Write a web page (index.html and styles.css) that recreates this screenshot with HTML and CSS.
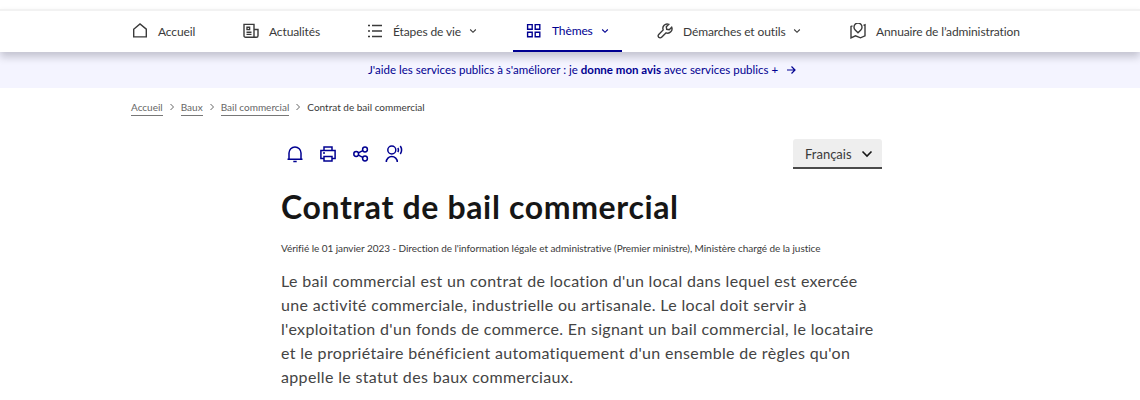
FILE: index.html
```html
<!DOCTYPE html>
<html lang="fr">
<head>
  <meta charset="UTF-8">
  <title>Contrat de bail commercial</title>
  <meta name="viewport" content="width=device-width, initial-scale=1.0">
  <link rel="stylesheet" href="styles.css">
</head>
<body>
  <header class="header">
    <nav class="nav">
      <a class="nav-item" href="#">
        <svg class="icon" viewBox="0 0 16 16"><path d="M1.700 6.200 8 1l6.300 5.200v7.700H1.700z"/></svg>
        <span class="nav-label">Accueil</span>
      </a>
      <a class="nav-item" href="#">
        <svg class="icon" viewBox="0 0 16 16"><path d="M11 14.300H2.600A1.600 1.600 0 0 1 1 12.700V1.400h10zM11 6.500h4v6.200a1.600 1.600 0 0 1-1.600 1.600H10.500M3.500 9.200h5M3.500 11.400h5M4 4.200h2.600v2.400H4z"/></svg>
        <span class="nav-label">Actualités</span>
      </a>
      <a class="nav-item" href="#">
        <svg class="icon" viewBox="0 0 16 16"><path d="M5 2.500h10M5 8h10M5 13.500h10M1 2.500h2M1 8h2M1 13.500h2"/></svg>
        <span class="nav-label">Étapes de vie</span>
        <svg class="chevron" viewBox="0 0 8 8"><path d="m1.200 2.500 2.800 2.800 2.800-2.800"/></svg>
      </a>
      <a class="nav-item active" href="#">
        <svg class="icon" viewBox="0 0 16 16"><path d="M1.600 1.600h4.600v4.600H1.600zM9.200 1.600h4.600v4.600H9.200zM1.600 9.200h4.600v4.600H1.600zM9.200 9.200h4.600v4.600H9.200z"/></svg>
        <span class="nav-label">Thèmes</span>
        <svg class="chevron" viewBox="0 0 8 8"><path d="m1.200 2.500 2.800 2.800 2.800-2.800"/></svg>
      </a>
      <a class="nav-item" href="#">
        <svg class="icon" viewBox="0 0 16 16"><path d="M6.200 6.900A4.300 4.300 0 0 1 11.800 1.300L9.300 3.800l.4 2.500 2.500.4 2.500-2.500A4.300 4.300 0 0 1 9.100 9.800l-4.500 4.500a2 2 0 0 1-2.900-2.900z"/></svg>
        <span class="nav-label">Démarches et outils</span>
        <svg class="chevron" viewBox="0 0 8 8"><path d="m1.200 2.500 2.800 2.800 2.800-2.800"/></svg>
      </a>
      <a class="nav-item" href="#">
        <svg class="icon" viewBox="0 0 16 16"><path d="M8 9.800 5.200 7a4 4 0 1 1 5.600 0zM2.500 2.800 1 3.400v11.400l4.500-2 5 2 4.500-2V1.800l-1.500.6"/></svg>
        <span class="nav-label">Annuaire de l’administration</span>
      </a>
    </nav>
  </header>

  <div class="notice">
    <a class="notice-link" href="#">
      <span class="notice-text">J'aide les services publics à s'améliorer : je <strong>donne mon avis</strong> avec services publics +</span>
      <svg class="arrow" viewBox="0 0 10 10"><path d="M1 5h8M5.500 1.500 9 5 5.500 8.500"/></svg>
    </a>
  </div>

  <div class="breadcrumb">
    <a class="crumb" href="#">Accueil</a>
    <svg class="separator" viewBox="0 0 6 8"><path d="m1.500 1 3 3-3 3"/></svg>
    <a class="crumb" href="#">Baux</a>
    <svg class="separator" viewBox="0 0 6 8"><path d="m1.500 1 3 3-3 3"/></svg>
    <a class="crumb" href="#">Bail commercial</a>
    <svg class="separator" viewBox="0 0 6 8"><path d="m1.500 1 3 3-3 3"/></svg>
    <span class="crumb-current">Contrat de bail commercial</span>
  </div>

  <main class="content">
    <div class="toolbar">
      <div class="tools">
        <svg class="tool" viewBox="0 0 18 18"><path d="M3 14.200V8a6 6 0 0 1 12 0v6.200M1.500 14.200h15M7.300 16.500h3.400"/></svg>
        <svg class="tool" viewBox="0 0 18 18"><path d="M5 5.500V2h8v3.500M5 13.500H1.900v-8h14.200v8H13M5 11.500h8V16H5zM4 8h2"/></svg>
        <svg class="tool" viewBox="0 0 18 18"><circle cx="4.200" cy="9" r="2.400"/><circle cx="13" cy="4.500" r="2.400"/><circle cx="13" cy="13.500" r="2.400"/><path d="m6.400 7.900 4.400-2.300M6.400 10.100l4.400 2.300"/></svg>
        <svg class="tool" viewBox="0 0 18 18"><circle cx="6.800" cy="5" r="4"/><path d="M1.300 17a5.500 5.500 0 0 1 11 0M12.800 3q1.300 2 0 4M15.300 1q2.600 4 0 8"/></svg>
      </div>
      <button class="language" type="button">
        <span class="language-label">Français</span>
        <svg class="language-chevron" viewBox="0 0 12 12"><path d="m1.500 3.500 4.500 4.500 4.500-4.500"/></svg>
      </button>
    </div>
    <h1 class="title">Contrat de bail commercial</h1>
    <p class="date">Vérifié le 01 janvier 2023 - Direction de l'information légale et administrative (Premier ministre), Ministère chargé de la justice</p>
    <p class="intro">
      <span class="line">Le bail commercial est un contrat de location d'un local dans lequel est exercée</span>
      <span class="line">une activité commerciale, industrielle ou artisanale. Le local doit servir à</span>
      <span class="line">l'exploitation d'un fonds de commerce. En signant un bail commercial, le locataire</span>
      <span class="line">et le propriétaire bénéficient automatiquement d'un ensemble de règles qu'on</span>
      <span class="line">appelle le statut des baux commerciaux.</span>
    </p>
  </main>
</body>
</html>
```

FILE: styles.css
```css
body {
  margin: 0;
  background: #fff;
  color: #3a3a3a;
  font-family: Lato, "Noto Sans", sans-serif;
  font-variant-ligatures: none;
  overflow: hidden;
}

a {
  color: inherit;
  text-decoration: none;
}

svg {
  fill: none;
  stroke: currentColor;
  flex-shrink: 0;
}

.header {
  position: relative;
  margin-top: 9px;
  border-top: 2px solid #f2f2f2;
  background: #fff;
  box-shadow: 0 5px 8px rgba(0, 0, 18, 0.2);
}

.nav {
  display: grid;
  grid-template-columns: 111px 124px 159px 131px 193px auto;
  justify-content: start;
  padding-left: 119px;
  height: 41px;
}

.nav-item {
  display: flex;
  align-items: center;
  justify-self: start;
  box-sizing: border-box;
  height: 41px;
  padding: 0 13px 1px;
  font-size: 12px;
  letter-spacing: -0.12px;
  white-space: nowrap;
}

.icon {
  width: 16px;
  height: 16px;
  margin-right: 10px;
  stroke-width: 1.4;
}

.chevron {
  width: 8px;
  height: 8px;
  margin-left: 8px;
  stroke-width: 1.1;
}

.active {
  color: #000091;
  border-bottom: 2px solid #000091;
  padding-bottom: 0;
}

.notice {
  display: flex;
  box-sizing: border-box;
  height: 36px;
  padding: 0 0 1px 368px;
  background: #f4f4ff;
  color: #000091;
}

.notice-link {
  display: flex;
  align-items: center;
  gap: 8px;
  font-size: 11.5px;
  white-space: nowrap;
}

.arrow {
  width: 10px;
  height: 10px;
  stroke-width: 1.2;
}

.breadcrumb {
  display: flex;
  align-items: center;
  height: 16px;
  padding: 11px 0 0 131px;
  font-size: 10px;
  color: #666;
  white-space: nowrap;
}

.crumb {
  padding-top: 1px;
  line-height: 15px;
  border-bottom: 1px solid #777;
}

.separator {
  width: 6px;
  height: 8px;
  margin: 0 6px;
  stroke-width: 1;
}

.crumb-current {
  color: #3a3a3a;
}

.content {
  width: 601px;
  margin: 24px 0 0 281px;
}

.toolbar {
  display: flex;
  justify-content: space-between;
  height: 30px;
}

.tools {
  display: flex;
  align-items: center;
  gap: 15px;
  padding-left: 5px;
  color: #000091;
}

.tool {
  width: 18px;
  height: 18px;
  stroke-width: 1.5;
}

.language {
  display: flex;
  align-items: center;
  justify-content: space-between;
  width: 89px;
  height: 30px;
  padding: 2px 9px 0 12px;
  border: 0;
  border-bottom: 2px solid #4a4a4a;
  border-radius: 3px 3px 0 0;
  background: #eee;
  color: #3a3a3a;
  font: 13px Lato, sans-serif;
}

.language-chevron {
  width: 12px;
  height: 12px;
  color: #161616;
  stroke-width: 1.6;
}

.title {
  margin: 18px 0 0;
  color: #161616;
  font-size: 32px;
  font-weight: 700;
  letter-spacing: 0.64px;
  line-height: 40px;
  white-space: nowrap;
}

.date {
  margin: 13px 0 0;
  font-size: 10px;
  letter-spacing: -0.055px;
  line-height: 16px;
  white-space: nowrap;
}

.intro {
  margin: 13px 0 0;
  color: #444;
  font-size: 16px;
  letter-spacing: 0.34px;
  line-height: 24px;
}

.line {
  display: block;
  white-space: nowrap;
}
```
